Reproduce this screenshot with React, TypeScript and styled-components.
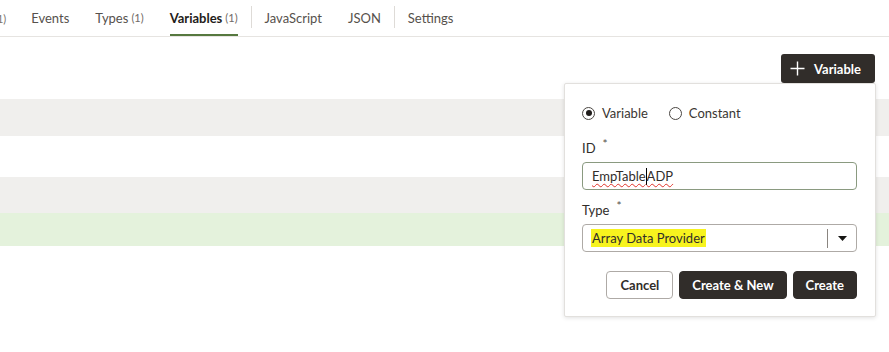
import styled, { createGlobalStyle } from 'styled-components';

const GlobalStyle = createGlobalStyle`
  html, body {
    margin: 0;
    padding: 0;
    background: #ffffff;
  }
  body {
    font-family: 'Lato', 'Noto Sans', sans-serif;
    font-size: 13px;
    color: #312d2a;
  }
  * {
    box-sizing: border-box;
  }
`;

const tabs = [
  { label: 'Events' },
  { label: 'Types', count: 1 },
  { label: 'Variables', count: 1, selected: true },
  { divider: true },
  { label: 'JavaScript' },
  { label: 'JSON' },
  { divider: true },
  { label: 'Settings' },
];

const rows = [
  { height: 37, tone: 'gray' },
  { height: 41, tone: 'white' },
  { height: 36, tone: 'gray' },
  { height: 33, tone: 'green' },
] as const;

/**
 * 변수 목록 화면 + 새 변수 만들기 팝업
 */
const App = () => {
  return (
    <Page>
      <GlobalStyle />

      <TabBar>
        <TabCut>(1)</TabCut>
        {tabs.map((tab, i) =>
          tab.divider ? (
            <TabDivider key={i} />
          ) : (
            <Tab key={i} $selected={!!tab.selected}>
              {tab.label}
              {tab.count !== undefined && <TabCount>({tab.count})</TabCount>}
            </Tab>
          ),
        )}
      </TabBar>

      <Content>
        <Toolbar>
          <AddButton>
            <svg width="15" height="15" viewBox="0 0 15 15" fill="none">
              <path d="M7.5 0.5v14M0.5 7.5h14" stroke="#ffffff" strokeWidth="1.4" />
            </svg>
            Variable
          </AddButton>
        </Toolbar>

        <Rows>
          {rows.map((row, i) => (
            <Row key={i} $tone={row.tone} style={{ height: row.height }} />
          ))}
        </Rows>

        <Popup>
          <RadioGroup>
            <RadioOption>
              <Radio $checked />
              Variable
            </RadioOption>
            <RadioOption>
              <Radio />
              Constant
            </RadioOption>
          </RadioGroup>

          <Field>
            <Label>
              ID<Required>*</Required>
            </Label>
            <TextInput $focused>
              <Misspelled>
                EmpTable
                <Caret />
                ADP
              </Misspelled>
            </TextInput>
          </Field>

          <Field>
            <Label>
              Type<Required>*</Required>
            </Label>
            <SelectBox>
              <SelectValue>
                <Highlight>Array Data Provider</Highlight>
              </SelectValue>
              <SelectDivider />
              <SelectArrow>
                <svg width="9" height="5" viewBox="0 0 9 5">
                  <path d="M0 0h9L4.5 5z" fill="#161513" />
                </svg>
              </SelectArrow>
            </SelectBox>
          </Field>

          <Actions>
            <Button $variant="outlined">Cancel</Button>
            <Button $variant="solid">Create &amp; New</Button>
            <Button $variant="solid">Create</Button>
          </Actions>
        </Popup>
      </Content>
    </Page>
  );
};

const Page = styled.div`
  width: 889px;
  height: 352px;
  overflow: hidden;
  position: relative;
`;

const TabBar = styled.div`
  display: flex;
  align-items: stretch;
  height: 37px;
  border-bottom: 1px solid #e6e4e1;
  font-size: 13px;
`;

const TabCut = styled.div`
  display: flex;
  align-items: center;
  margin-right: 12px;
  margin-left: -6px;
  font-size: 11px;
  color: #7a756f;
  padding-top: 1px;
`;

const Tab = styled.div<{ $selected: boolean }>`
  display: flex;
  align-items: center;
  gap: 3px;
  margin: 0 13px;
  padding-top: 1px;
  border-bottom: 2px solid ${({ $selected }) => ($selected ? '#56783f' : 'transparent')};
  color: ${({ $selected }) => ($selected ? '#1f1c1a' : '#56514c')};
  font-weight: ${({ $selected }) => ($selected ? 700 : 400)};
  white-space: nowrap;
`;

const TabCount = styled.span`
  font-size: 11px;
  font-weight: 400;
  color: #6f6a65;
`;

const TabDivider = styled.div`
  width: 1px;
  margin: 6px 0 8px;
  background: #dedbd7;
`;

const Content = styled.div`
  position: relative;
`;

const Toolbar = styled.div`
  display: flex;
  justify-content: flex-end;
  padding: 17px 14px 0 0;
`;

const AddButton = styled.button`
  display: flex;
  align-items: center;
  gap: 9px;
  height: 29px;
  padding: 0 14px 0 9px;
  border: none;
  border-radius: 3px;
  background: #312d2a;
  color: #ffffff;
  font-family: inherit;
  font-size: 13px;
  font-weight: 700;
`;

const Rows = styled.div`
  display: flex;
  flex-direction: column;
  margin-top: 16px;
`;

const toneColors = {
  gray: '#f0efed',
  white: '#ffffff',
  green: '#e4f2dc',
};

const Row = styled.div<{ $tone: keyof typeof toneColors }>`
  width: 100%;
  background: ${({ $tone }) => toneColors[$tone]};
`;

const Popup = styled.div`
  position: absolute;
  top: 46px;
  left: 564px;
  width: 312px;
  height: 234px;
  padding: 21px 18px 0 17px;
  background: #ffffff;
  border: 1px solid #e2e0dd;
  border-radius: 2px;
  box-shadow: 0 1px 4px rgba(0, 0, 0, 0.12);
  display: flex;
  flex-direction: column;
`;

const RadioGroup = styled.div`
  display: flex;
  gap: 21px;
  height: 16px;
  align-items: center;
  margin-bottom: 7px;
`;

const RadioOption = styled.label`
  display: flex;
  align-items: center;
  gap: 7px;
  color: #3a3632;
`;

const Radio = styled.span<{ $checked?: boolean }>`
  position: relative;
  width: 13px;
  height: 13px;
  border-radius: 50%;
  border: 1px solid #4a4642;

  &::after {
    content: '';
    display: ${({ $checked }) => ($checked ? 'block' : 'none')};
    position: absolute;
    inset: 2.5px;
    border-radius: 50%;
    background: #1f1c1a;
  }
`;

const Field = styled.div`
  display: flex;
  flex-direction: column;
  margin-top: 10px;
`;

const Label = styled.div`
  display: flex;
  align-items: flex-start;
  height: 20px;
  color: #312d2a;
  line-height: 20px;
`;

const Required = styled.span`
  margin-left: 7px;
  font-size: 12px;
  line-height: 12px;
  color: #56514c;
`;

const TextInput = styled.div<{ $focused?: boolean }>`
  display: flex;
  align-items: center;
  height: 28px;
  margin-top: 4px;
  padding: 0 9px;
  border: 1px solid ${({ $focused }) => ($focused ? '#8a9a80' : '#aeaaa6')};
  border-radius: 4px;
  color: #312d2a;
`;

const Misspelled = styled.span`
  display: inline-flex;
  align-items: center;
  text-decoration: underline wavy #e0332a;
  text-decoration-thickness: 1px;
  text-underline-offset: 2px;
`;

const Caret = styled.span`
  display: inline-block;
  width: 1px;
  height: 17px;
  background: #000000;
`;

const SelectBox = styled.div`
  display: flex;
  align-items: center;
  height: 28px;
  margin-top: 4px;
  border: 1px solid #aeaaa6;
  border-radius: 4px;
`;

const SelectValue = styled.div`
  flex: 1;
  padding-left: 8px;
`;

const Highlight = styled.span`
  background: #f7f31e;
  padding: 1px 1px;
  color: #312d2a;
`;

const SelectDivider = styled.div`
  width: 1px;
  height: 19px;
  background: #8a8580;
`;

const SelectArrow = styled.div`
  display: flex;
  align-items: center;
  justify-content: center;
  width: 28px;
`;

const Actions = styled.div`
  display: flex;
  justify-content: flex-end;
  gap: 6px;
  margin-top: 19px;
`;

const Button = styled.button<{ $variant: 'solid' | 'outlined' }>`
  height: 28px;
  padding: 0 ${({ $variant }) => ($variant === 'solid' ? 12 : 13)}px;
  border-radius: 4px;
  font-family: inherit;
  font-size: 13px;
  font-weight: 700;
  border: 1px solid ${({ $variant }) => ($variant === 'solid' ? '#312d2a' : '#aeaaa6')};
  background: ${({ $variant }) => ($variant === 'solid' ? '#312d2a' : '#ffffff')};
  color: ${({ $variant }) => ($variant === 'solid' ? '#ffffff' : '#312d2a')};
`;

export default App;
